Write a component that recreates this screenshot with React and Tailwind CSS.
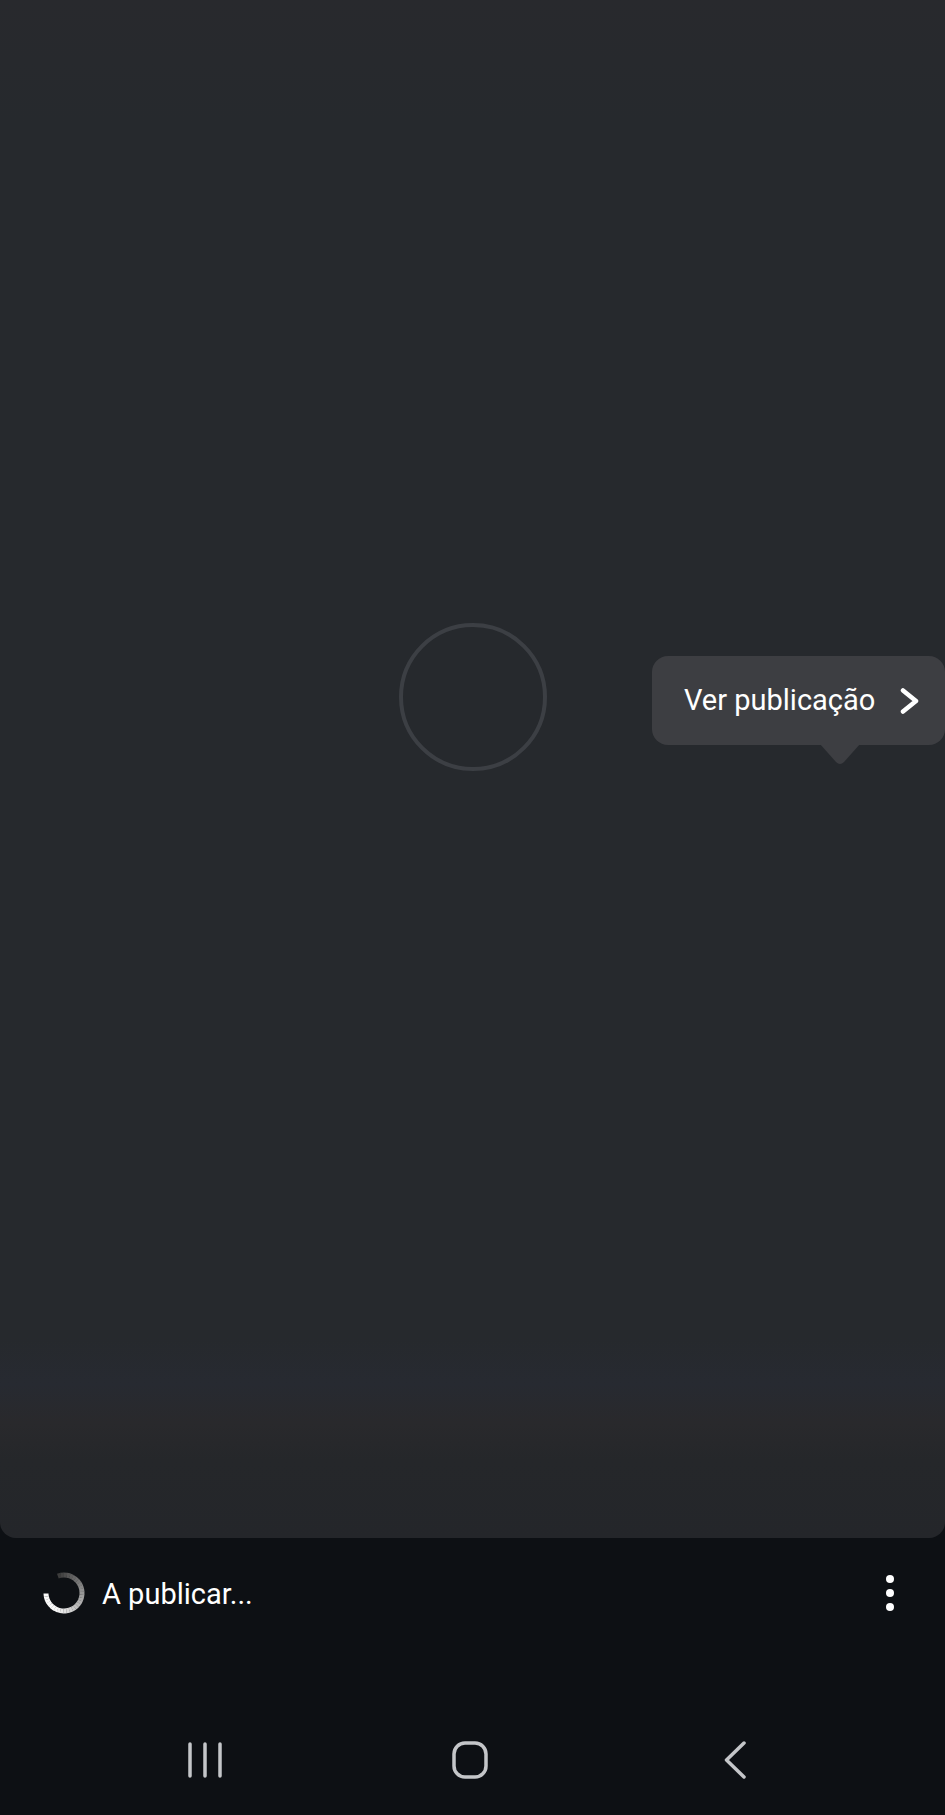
import React from 'react';

// arc pieces for the small spinner, fading from the top round to bottom left
const spinnerSegments = Array.from({ length: 30 }, (_, i) => {
  const start = -20 + i * 9.6;
  const end = start + 10.2;
  const toPoint = (deg) => {
    const rad = (deg * Math.PI) / 180;
    return [21 + 18 * Math.sin(rad), 21 - 18 * Math.cos(rad)];
  };
  const [x1, y1] = toPoint(start);
  const [x2, y2] = toPoint(end);
  const shade = Math.round(60 + Math.min(1, (i / 29) * 1.25) * 190);
  return { d: `M${x1} ${y1}A18 18 0 0 1 ${x2} ${y2}`, color: `rgb(${shade},${shade},${shade})` };
});

function Spinner() {
  return (
    <svg width="42" height="42" viewBox="0 0 42 42" fill="none">
      {spinnerSegments.map((seg) => (
        <path key={seg.d} d={seg.d} stroke={seg.color} strokeWidth="5" />
      ))}
    </svg>
  );
}

function ViewPostTooltip() {
  return (
    <div className="absolute right-0 top-[656px] w-[293px] h-[89px] rounded-[16px] bg-[#3d3e42] flex items-center pl-[32px]">
      <span className="text-[29px] leading-none text-white">Ver publicação</span>
      <svg className="ml-[25px]" width="20" height="28" viewBox="0 0 20 28" fill="none">
        <path d="M3 3.5l13 10.5L3 24.5" stroke="#fff" strokeWidth="4.5" strokeLinecap="round" strokeLinejoin="round" />
      </svg>
      <svg className="absolute left-[168px] top-[88px]" width="40" height="21" viewBox="0 0 40 21">
        <path d="M0 0h40L24 18q-4 4-8 0z" fill="#3d3e42" />
      </svg>
    </div>
  );
}

export default function App() {
  return (
    <div className="relative w-[945px] h-[1815px] overflow-hidden bg-[#0d1014] flex flex-col font-['Roboto',sans-serif]">
      <main className="h-[1538px] shrink-0 rounded-b-[16px] bg-[linear-gradient(180deg,#28292d_0%,#26292d_8%,#26292d_87%,#272a31_90%,#29292c_92.5%,#25272a_95%,#24262a_100%)] flex items-center justify-center pb-[144px]">
        <div className="w-[148px] h-[148px] rounded-full border-[4px] border-[#3c3f44]" />
      </main>

      <ViewPostTooltip />

      <div className="h-[110px] shrink-0 flex items-center pl-[43px] pr-[51px]">
        <Spinner />
        <span className="ml-[17px] mt-[2px] text-[29px] leading-none text-white">A publicar...</span>
        <div className="ml-auto flex flex-col gap-[6px]">
          <span className="w-[8px] h-[8px] rounded-full bg-white" />
          <span className="w-[8px] h-[8px] rounded-full bg-white" />
          <span className="w-[8px] h-[8px] rounded-full bg-white" />
        </div>
      </div>

      <nav className="flex-1 flex items-start pl-[72px] pt-[93px]">
        <div className="w-[265px] h-[38px] flex items-center justify-center">
          <svg width="36" height="36" viewBox="0 0 36 36" fill="none" stroke="#c4c6c9" strokeWidth="3.5" strokeLinecap="round">
            <path d="M3 2v32M18 2v32M33 2v32" />
          </svg>
        </div>
        <div className="w-[265px] h-[38px] flex items-center justify-center">
          <svg width="36" height="38" viewBox="0 0 36 38" fill="none">
            <rect x="2" y="2" width="32" height="34" rx="11" stroke="#c4c6c9" strokeWidth="3.5" />
          </svg>
        </div>
        <div className="w-[265px] h-[38px] flex items-center justify-center">
          <svg width="22" height="38" viewBox="0 0 22 38" fill="none">
            <path d="M20 2L2.5 19 20 36" stroke="#c4c6c9" strokeWidth="3.5" strokeLinecap="round" strokeLinejoin="round" />
          </svg>
        </div>
      </nav>
    </div>
  );
}
